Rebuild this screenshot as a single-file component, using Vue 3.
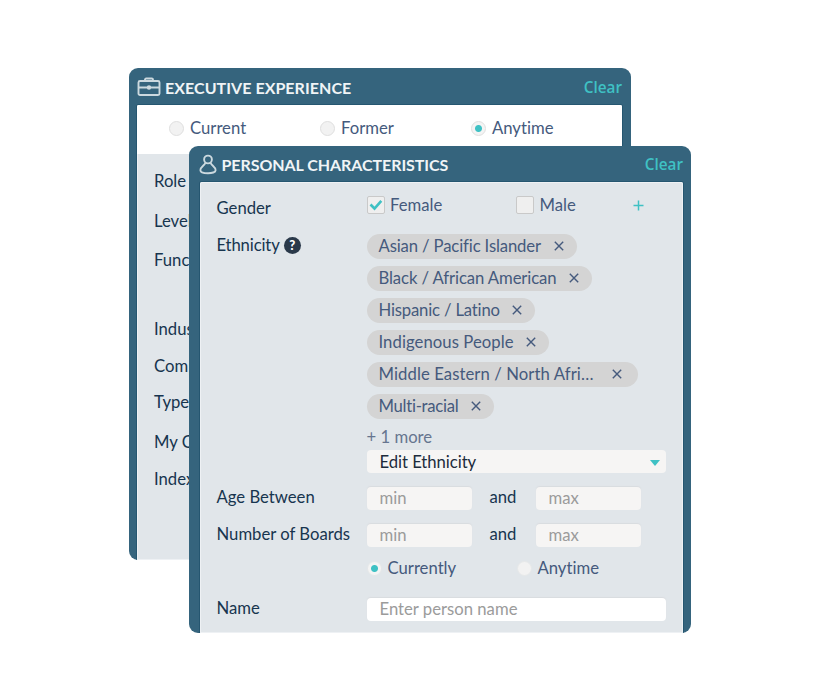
<script setup>
import { ref } from 'vue';

const period = ref('Anytime');
const boardPeriod = ref('Currently');
const female = ref(true);
const male = ref(false);

const periods = ['Current', 'Former', 'Anytime'];
const boardPeriods = ['Currently', 'Anytime'];

// height of each row, the ends of the names are hidden behind the front panel
const filters = [
  { name: 'Role', height: 40 },
  { name: 'Level', height: 39 },
  { name: 'Function', height: 69 },
  { name: 'Industry', height: 37 },
  { name: 'Company', height: 36 },
  { name: 'Type', height: 40 },
  { name: 'My Companies', height: 37 },
  { name: 'Index', height: 38 },
];

const tags = ref([
  { name: 'Asian / Pacific Islander', width: 210, spacing: -0.14 },
  { name: 'Black / African American', width: 225, spacing: -0.1 },
  { name: 'Hispanic / Latino', width: 168, spacing: -0.18 },
  { name: 'Indigenous People', width: 182, spacing: 0.06 },
  { name: 'Middle Eastern / North Afri…', width: 271, spacing: 0.08 },
  { name: 'Multi-racial', width: 127, spacing: -0.28 },
]);

const ranges = ['Age Between', 'Number of Boards'];

function removeTag(index) {
  tags.value.splice(index, 1);
}
</script>

<template>
  <main class="canvas">
    <section class="panel panel-back">
      <header class="panel-header">
        <svg class="case-icon" width="24" height="20" viewBox="0 0 24 20">
          <path d="M8 4V2.700Q8 1.500 9.200 1.500H14.800Q16 1.500 16 2.700V4" />
          <rect x="1.500" y="4" width="21" height="14" rx="1.500" />
          <path d="M2 10.500H22" />
          <circle cx="12" cy="10.500" r="2.200" class="filled" />
        </svg>
        <h2>EXECUTIVE EXPERIENCE</h2>
        <a class="clear">Clear</a>
      </header>
      <div class="panel-body">
        <div class="periods">
          <label v-for="item in periods" :key="item" class="option" @click="period = item">
            <span class="radio" :class="{ checked: period === item }"></span>{{ item }}
          </label>
        </div>
        <div class="filters">
          <div v-for="item in filters" :key="item.name" class="filter" :style="{ height: item.height + 'px' }">
            {{ item.name }}
          </div>
        </div>
      </div>
    </section>

    <section class="panel panel-front">
      <header class="panel-header">
        <svg class="person-icon" width="18" height="21" viewBox="0 0 18 21">
          <circle cx="9" cy="5.500" r="3.900" />
          <path d="M6.300 9C5.500 11.500 1.400 12.800 1.400 16.200C1.400 18.300 5 19.200 9 19.200S16.600 18.300 16.600 16.200C16.600 12.800 12.500 11.500 11.700 9" />
        </svg>
        <h2>PERSONAL CHARACTERISTICS</h2>
        <a class="clear">Clear</a>
      </header>
      <div class="panel-body form">
        <div class="row gender">
          <div class="label">Gender</div>
          <div class="control inline">
            <label class="option" @click="female = !female">
              <span class="checkbox">
                <svg v-if="female" width="14" height="12" viewBox="0 0 14 12"><path d="M1.500 5.500L5.500 9.500L12.300 1.800" /></svg>
              </span>Female
            </label>
            <label class="option" @click="male = !male">
              <span class="checkbox">
                <svg v-if="male" width="14" height="12" viewBox="0 0 14 12"><path d="M1.500 5.500L5.500 9.500L12.300 1.800" /></svg>
              </span>Male
            </label>
            <svg class="plus" width="11" height="11" viewBox="0 0 11 11"><path d="M5.500 .5V10.500M.5 5.500H10.500" /></svg>
          </div>
        </div>

        <div class="row ethnicity">
          <div class="label">Ethnicity <span class="help">?</span></div>
          <div class="control">
            <div class="tags">
              <span
                v-for="(tag, i) in tags"
                :key="tag.name"
                class="tag"
                :style="{ width: tag.width + 'px', letterSpacing: tag.spacing + 'px' }"
              >
                {{ tag.name }}
                <svg width="10" height="10" viewBox="0 0 10 10" @click="removeTag(i)"><path d="M.8 .8L9.200 9.200M9.200 .8L.8 9.200" /></svg>
              </span>
            </div>
            <div class="more">+ 1 more</div>
            <div class="select">Edit Ethnicity<i class="arrow"></i></div>
          </div>
        </div>

        <div v-for="range in ranges" :key="range" class="row range">
          <div class="label">{{ range }}</div>
          <div class="control inline">
            <input type="text" placeholder="min">
            <span class="and">and</span>
            <input type="text" placeholder="max">
          </div>
        </div>

        <div class="row boards">
          <div class="label"></div>
          <div class="control inline">
            <label v-for="item in boardPeriods" :key="item" class="option" @click="boardPeriod = item">
              <span class="radio" :class="{ checked: boardPeriod === item }"></span>{{ item }}
            </label>
          </div>
        </div>

        <div class="row name">
          <div class="label">Name</div>
          <div class="control"><input type="text" class="wide" placeholder="Enter person name"></div>
        </div>
      </div>
    </section>
  </main>
</template>

<style>
body {
  background: #fff;
}
</style>

<style scoped>
* {
  box-sizing: border-box;
}

.canvas {
  position: relative;
  width: 820px;
  height: 700px;
  overflow: hidden;
  font-family: Lato, "Liberation Sans", sans-serif;
  font-size: 16.700px;
  font-variant-ligatures: none;
  line-height: 20px;
  color: #17354f;
}

.panel {
  position: absolute;
  display: flex;
  flex-direction: column;
  width: 502px;
  overflow: hidden;
  background: #35647d;
  border-radius: 9px;
}

.panel-back {
  left: 129px;
  top: 68px;
  height: 491.500px;
  padding: 0 9px 0 8px;
}

.panel-front {
  left: 189px;
  top: 145.500px;
  height: 487px;
  padding: 0 8px 0 10.500px;
}

.panel-header {
  display: flex;
  align-items: center;
  flex: none;
  height: 36.500px;
  padding-top: 2px;
}

.panel-header h2 {
  margin: 0;
  font-size: 16px;
  font-weight: 700;
  letter-spacing: .05px;
  color: #f0f4f6;
}

.panel-back h2 {
  padding-top: 1px;
}

.panel-front h2 {
  letter-spacing: -.06px;
}

.panel-header svg {
  flex: none;
  fill: none;
  stroke: #ccd9df;
  stroke-width: 1.900;
}

.case-icon {
  margin-right: 4px;
}

.panel-header .filled {
  fill: #ccd9df;
  stroke: none;
}

.person-icon {
  margin-right: 5px;
  margin-left: -1px;
}

.clear {
  margin-left: auto;
  padding-bottom: 1px;
  font-family: "Open Sans", sans-serif;
  font-size: 15.300px;
  font-weight: 600;
  color: #3fc1c4;
}

.panel-body {
  flex: 1;
  background: #e1e6ea;
  border-radius: 2px 2px 0 0;
  box-shadow: 0 0 0 1px #255670, inset 0 0 0 1px #eef1f4;
  overflow: hidden;
}

.periods {
  display: grid;
  grid-template-columns: 151px 151px 1fr;
  align-items: center;
  height: 49.500px;
  padding: 0 0 2px 32px;
  background: #fff;
}

.filters {
  padding: 16.500px 0 0 17px;
}

.option {
  display: flex;
  align-items: center;
  color: #455a7d;
}

.radio {
  flex: none;
  width: 15px;
  height: 15px;
  margin-right: 6px;
  background: #f2f2f2;
  border: 1px solid #dfdfdf;
  border-radius: 50%;
}

.radio.checked {
  background: radial-gradient(circle, #3fc1c4 3px, #f4f4f4 4px);
}

.form {
  padding-left: 17px;
}

.row {
  display: grid;
  grid-template-columns: 150px 1fr;
}

.inline {
  display: flex;
  align-items: center;
}

.gender {
  height: 52px;
  padding-top: 13px;
}

.gender .label {
  padding-top: 3px;
}

.gender .control {
  height: 20px;
}

.gender .option {
  width: 149.500px;
}

.gender .option + .option {
  width: 116.500px;
}

.checkbox {
  display: flex;
  align-items: center;
  justify-content: center;
  flex: none;
  width: 18px;
  height: 18px;
  margin-right: 5.500px;
  background: #efefef;
  border: 1px solid #c9c9c9;
  border-radius: 2px;
}

.checkbox path,
.plus path {
  fill: none;
  stroke: #3fc1c4;
}

.checkbox path {
  stroke-width: 2.600;
}

.plus path {
  stroke-width: 1.500;
}

.ethnicity {
  height: 253px;
}

.ethnicity .label {
  display: flex;
  align-items: center;
  gap: 4px;
  height: 22px;
  letter-spacing: -.15px;
}

.help {
  width: 17px;
  height: 17px;
  background: #2a394a;
  border-radius: 50%;
  font-size: 13px;
  font-weight: 900;
  line-height: 17px;
  text-align: center;
  color: #fff;
}

.tags {
  display: flex;
  flex-direction: column;
  gap: 7.500px;
}

.tag {
  display: flex;
  align-items: center;
  justify-content: space-between;
  height: 24.500px;
  padding: 0 13px 0 12px;
  white-space: nowrap;
  background: #d4d4d4;
  border-radius: 13px;
  color: #455a7d;
}

.tag:nth-child(5) {
  padding-right: 16px;
}

.tag svg {
  flex: none;
}

.tag path {
  stroke: #455a7d;
  stroke-width: 1.400;
}

.more {
  margin-top: 8px;
  height: 23px;
  color: #66758f;
}

.select {
  display: flex;
  align-items: center;
  justify-content: space-between;
  width: 299px;
  height: 23.500px;
  padding: 1px 6px 0 13px;
  background: #f6f5f4;
  border-radius: 4px;
  letter-spacing: -.05px;
  color: #1d2c3c;
}

.arrow {
  margin-top: 2px;
  border: 5px solid transparent;
  border-top: 6px solid #3fc1c4;
  border-bottom: 0;
}

.range {
  height: 37px;
}

input {
  display: block;
  width: 105px;
  height: 22.500px;
  padding: 0 13px 1px;
  background: #f6f5f4;
  border: 0;
  border-radius: 4px;
  box-shadow: 0 -1px 1px #d9dcdf;
  font: inherit;
}

input::placeholder {
  color: #9b9b9b;
}

.range .inline {
  height: 23px;
}

.and {
  width: 64px;
  padding: 0 1px 3px 0;
  text-align: center;
}

.boards {
  height: 37px;
}

.boards .inline {
  height: 14px;
}

.boards .option {
  width: 150px;
}

.boards .radio {
  border-color: #e6e8e9;
}

.wide {
  width: 299px;
  padding-bottom: 0;
  background: #fff;
}
</style>
